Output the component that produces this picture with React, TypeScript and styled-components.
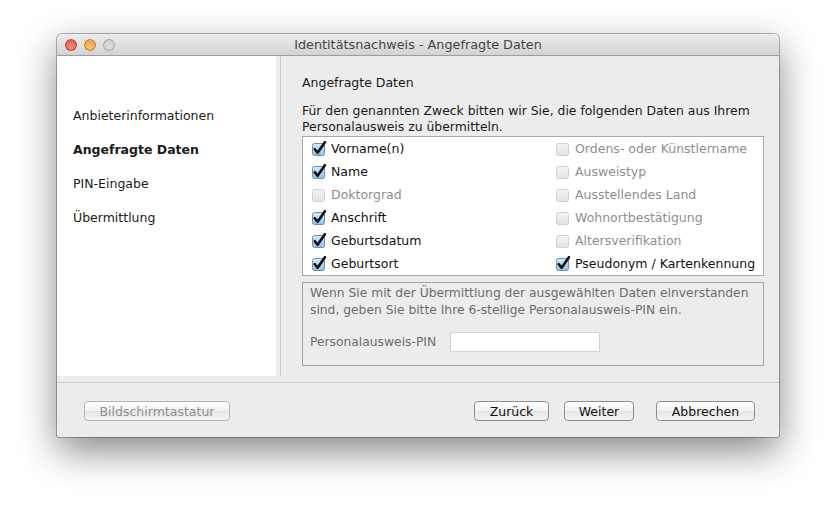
import React from "react";
import styled, { createGlobalStyle } from "styled-components";

const GlobalStyle = createGlobalStyle`
  html, body {
    margin: 0;
    padding: 0;
    background: #ffffff;
  }
  body {
    font-family: "DejaVu Sans", "Liberation Sans", sans-serif;
    font-size: 12px;
    color: #1c1c1c;
  }
`;

const Stage = styled.div`
  width: 836px;
  height: 516px;
  padding: 34px 0 0 57px;
  box-sizing: border-box;
`;

const Window = styled.div`
  width: 722px;
  height: 403px;
  display: flex;
  flex-direction: column;
  background: #ececec;
  border-radius: 5px 5px 2px 2px;
  box-shadow: 0 0 0 1px rgba(0, 0, 0, 0.28), 0 14px 38px rgba(0, 0, 0, 0.48);
  overflow: hidden;
`;

const TitleBar = styled.div`
  height: 22px;
  flex: none;
  display: flex;
  align-items: center;
  position: relative;
  background: linear-gradient(#ececec, #d3d3d3);
  border-bottom: 1px solid #9e9e9e;
  box-sizing: border-box;
`;

const Lights = styled.div`
  display: flex;
  gap: 7px;
  padding-left: 8px;
`;

const Light = styled.span<{ $color: string; $ring: string }>`
  width: 12px;
  height: 12px;
  border-radius: 50%;
  background: radial-gradient(circle at 50% 70%, #ffffff55 0, transparent 60%), ${(p) => p.$color};
  box-shadow: inset 0 0 0 1px ${(p) => p.$ring};
`;

const Title = styled.div`
  position: absolute;
  left: 0;
  right: 0;
  text-align: center;
  font-size: 12.8px;
  color: #444444;
  pointer-events: none;
`;

const Body = styled.div`
  height: 320px;
  flex: none;
  display: flex;
`;

const Sidebar = styled.div`
  width: 219px;
  background: #ffffff;
  display: flex;
  flex-direction: column;
  gap: 18px;
  padding: 52px 0 0 16px;
  box-sizing: border-box;
`;

const NavItem = styled.div<{ $active?: boolean }>`
  height: 16px;
  line-height: 16px;
  font-size: 12.5px;
  font-weight: ${(p) => (p.$active ? "bold" : "normal")};
  color: #1a1a1a;
`;

const Divider = styled.div`
  width: 1px;
  margin-left: 4px;
  background: #c9c9c9;
`;

const Content = styled.div`
  flex: 1;
  padding: 19px 15px 0 21px;
  display: flex;
  flex-direction: column;
`;

const Heading = styled.div`
  font-size: 12.5px;
  line-height: 16px;
  height: 16px;
  color: #1a1a1a;
`;

const Intro = styled.div`
  margin-top: 12px;
  font-size: 12.4px;
  line-height: 16px;
  color: #1a1a1a;
  white-space: nowrap;
`;

const FieldList = styled.div`
  margin-top: 1px;
  background: #ffffff;
  border: 1px solid #a9a9a9;
  display: grid;
  grid-template-columns: 244px 1fr;
  grid-template-rows: repeat(6, 23px);
  grid-auto-flow: column;
  padding-left: 8px;
`;

const Field = styled.label<{ $disabled?: boolean }>`
  display: flex;
  align-items: center;
  gap: 4px;
  font-size: 12.5px;
  white-space: nowrap;
  color: ${(p) => (p.$disabled ? "#8e8e8e" : "#111111")};
`;

const PinGroup = styled.div`
  margin-top: 6px;
  height: 84px;
  box-sizing: border-box;
  border: 1px solid #a4a4a4;
  padding: 2px 8px 0 7px;
  color: #6c6c6c;
  font-size: 12.3px;
  line-height: 17px;
  white-space: nowrap;
`;

const PinRow = styled.div`
  margin-top: 13px;
  display: flex;
  align-items: center;
  gap: 14px;
`;

const PinInput = styled.div`
  width: 150px;
  height: 20px;
  box-sizing: border-box;
  background: #ffffff;
  border: 1px solid #d4d4d4;
`;

const Separator = styled.div`
  margin-top: 6px;
  height: 1px;
  background: #cdcdcd;
`;

const Footer = styled.div`
  flex: 1;
  display: flex;
  align-items: flex-start;
  padding: 18px 24px 0 27px;
`;

const Button = styled.div<{ $width: number; $disabled?: boolean; $gap?: number }>`
  width: ${(p) => p.$width}px;
  height: 20px;
  box-sizing: border-box;
  margin-left: ${(p) => p.$gap ?? 0}px;
  display: flex;
  align-items: center;
  justify-content: center;
  border: 1px solid ${(p) => (p.$disabled ? "#b4b4b4" : "#8e8e8e")};
  border-radius: 4px;
  background: linear-gradient(#ffffff, #f1f1f1 50%, #e6e6e6 51%, #f4f4f4);
  font-size: 12.5px;
  color: ${(p) => (p.$disabled ? "#8f8f8f" : "#111111")};
`;

const Spacer = styled.div`
  flex: 1;
`;

function Check({ checked }: { checked: boolean }) {
  return (
    <svg width="16" height="16" viewBox="0 0 16 16">
      <defs>
        <linearGradient id="cbBlue" x1="0" y1="0" x2="0" y2="1">
          <stop offset="0" stopColor="#d8ebfb" />
          <stop offset="1" stopColor="#8ec0ec" />
        </linearGradient>
        <linearGradient id="cbGrey" x1="0" y1="0" x2="0" y2="1">
          <stop offset="0" stopColor="#f4f4f4" />
          <stop offset="1" stopColor="#e2e2e2" />
        </linearGradient>
      </defs>
      <rect
        x="1.5"
        y="2.5"
        width="12"
        height="12"
        rx="2"
        fill={checked ? "url(#cbBlue)" : "url(#cbGrey)"}
        stroke={checked ? "#6f8fae" : "#cfcfcf"}
      />
      {checked && (
        <path
          d="M3.8 8.2 L6.6 11.8 L13.9 1.2"
          fill="none"
          stroke="#111111"
          strokeWidth="2.6"
          strokeLinecap="round"
          strokeLinejoin="round"
        />
      )}
    </svg>
  );
}

const fields: { label: string; checked: boolean; disabled?: boolean }[] = [
  { label: "Vorname(n)", checked: true },
  { label: "Name", checked: true },
  { label: "Doktorgrad", checked: false, disabled: true },
  { label: "Anschrift", checked: true },
  { label: "Geburtsdatum", checked: true },
  { label: "Geburtsort", checked: true },
  { label: "Ordens- oder Künstlername", checked: false, disabled: true },
  { label: "Ausweistyp", checked: false, disabled: true },
  { label: "Ausstellendes Land", checked: false, disabled: true },
  { label: "Wohnortbestätigung", checked: false, disabled: true },
  { label: "Altersverifikation", checked: false, disabled: true },
  { label: "Pseudonym / Kartenkennung", checked: true },
];

export default function App() {
  return (
    <Stage>
      <GlobalStyle />
      <Window>
        <TitleBar>
          <Lights>
            <Light $color="#e8604f" $ring="#b4463a" />
            <Light $color="#f0a74a" $ring="#c07f2c" />
            <Light $color="#d0d0d0" $ring="#a3a3a3" />
          </Lights>
          <Title>Identitätsnachweis - Angefragte Daten</Title>
        </TitleBar>

        <Body>
          <Sidebar>
            <NavItem>Anbieterinformationen</NavItem>
            <NavItem $active>Angefragte Daten</NavItem>
            <NavItem>PIN-Eingabe</NavItem>
            <NavItem>Übermittlung</NavItem>
          </Sidebar>
          <Divider />
          <Content>
            <Heading>Angefragte Daten</Heading>
            <Intro>
              Für den genannten Zweck bitten wir Sie, die folgenden Daten aus Ihrem
              <br />
              Personalausweis zu übermitteln.
            </Intro>
            <FieldList>
              {fields.map((f) => (
                <Field key={f.label} $disabled={f.disabled}>
                  <Check checked={f.checked} />
                  {f.label}
                </Field>
              ))}
            </FieldList>
            <PinGroup>
              Wenn Sie mit der Übermittlung der ausgewählten Daten einverstanden
              <br />
              sind, geben Sie bitte Ihre 6-stellige Personalausweis-PIN ein.
              <PinRow>
                Personalausweis-PIN
                <PinInput />
              </PinRow>
            </PinGroup>
          </Content>
        </Body>

        <Separator />

        <Footer>
          <Button $width={146} $disabled>
            Bildschirmtastatur
          </Button>
          <Spacer />
          <Button $width={75}>Zurück</Button>
          <Button $width={70} $gap={15}>
            Weiter
          </Button>
          <Button $width={99} $gap={22}>
            Abbrechen
          </Button>
        </Footer>
      </Window>
    </Stage>
  );
}
